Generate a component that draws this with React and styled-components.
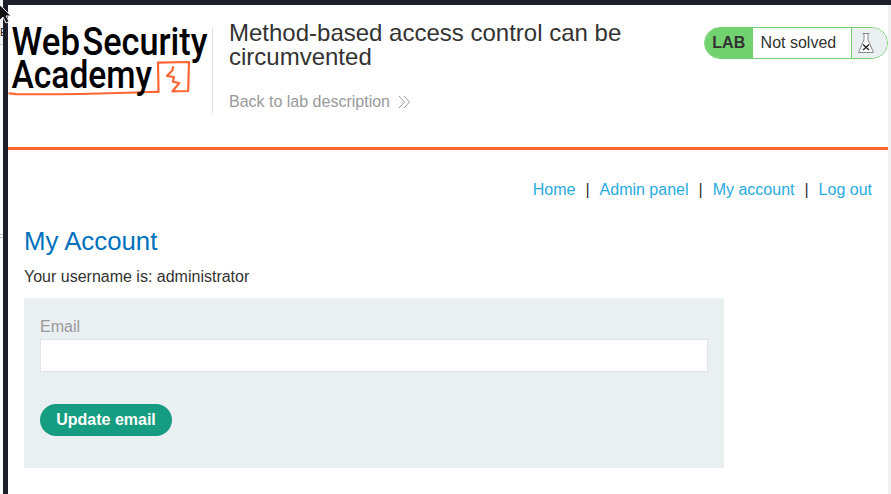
import React from "react";
import styled, { createGlobalStyle } from "styled-components";

const GlobalStyle = createGlobalStyle`
  * { box-sizing: border-box; }
  body {
    margin: 0;
    overflow: hidden;
    background: #fff;
    color: #333332;
    font: 16px/24px "Liberation Sans", Arial, sans-serif;
  }
`;

const Screen = styled.div`
  display: grid;
  grid-template-columns: 3px 1fr;
  width: 891px;
  height: 494px;
  position: relative;
  overflow: hidden;
`;

const Backdrop = styled.div`
  display: flex;
  flex-direction: column;
  overflow: hidden;
  background: #fff;
`;

const BackdropHead = styled.div`
  height: 45px;
  padding-top: 25px;
  border-bottom: 1px solid #ccc;
  background: #f4f4f5;
  color: #222;
  font-size: 11px;
  line-height: 14px;
`;

const BackdropRow = styled.div`
  height: 4px;
  margin-top: 189px;
  border: solid #bbb;
  border-width: 1px 0;
`;

const BrowserWindow = styled.div`
  display: flex;
  border: solid #1c1f2a;
  border-width: 5px 0 0 5px;
  background: #fff;
`;

const Page = styled.div`
  flex: 1;
  min-width: 0;
`;

const ScrollTrack = styled.div`
  width: 3px;
  background: #f0f0f0;
`;

const Header = styled.header`
  display: flex;
  align-items: flex-start;
  height: 145px;
  padding-top: 22px;
  border-bottom: 3px solid #ff6633;
`;

const Brand = styled.div`
  width: 205px;
  height: 86px;
  border-right: 1px solid #e1e1e1;
`;

const Logo = styled.svg`
  display: block;
  overflow: visible;
`;

const Wordmark = styled.text`
  font-family: Roboto, sans-serif;
  font-size: 38px;
  font-weight: 500;
  fill: #000;
`;

const Heading = styled.div`
  flex: 1;
  padding-left: 16px;
`;

const Title = styled.h2`
  width: 430px;
  margin: -6px 0 21px;
  font-size: 24px;
  font-weight: 400;
  line-height: 24px;
`;

const BackLink = styled.a`
  display: flex;
  align-items: center;
  gap: 8px;
  color: #999;
`;

const Status = styled.div`
  display: flex;
  width: 184px;
  height: 32px;
  overflow: hidden;
  border: 1px solid #72d26f;
  border-radius: 16px;
  line-height: 30px;
`;

const StatusTag = styled.span`
  width: 48px;
  padding-left: 7.3px;
  background: #72d26f;
  font-weight: 700;
`;

const StatusText = styled.span`
  flex: 1;
  padding-left: 7.6px;
`;

const StatusIcon = styled.span`
  display: flex;
  width: 36px;
  padding: 4px 0 0 6px;
  border-left: 1px solid #72d26f;
  background: #eaeff2;
`;

const Nav = styled.nav`
  display: flex;
  justify-content: flex-end;
  padding: 28px 16px 0 0;
`;

const NavLink = styled.a`
  color: #29abe2;
`;

const Divider = styled.span`
  width: 24.15px;
  text-align: center;
`;

const Content = styled.main`
  width: 716px;
  padding-left: 16px;
`;

const SectionTitle = styled.h1`
  margin: 23px 0 8px;
  color: #0071bc;
  font-size: 25.8px;
  font-weight: 400;
  line-height: 32px;
`;

const Text = styled.p`
  margin: 0 0 9px;
`;

const Form = styled.form`
  height: 170px;
  padding: 17px 16px;
  background: #eaeff2;
`;

const Label = styled.label`
  display: block;
  height: 24px;
  color: #999;
`;

const Input = styled.input`
  display: block;
  width: 100%;
  height: 33px;
  margin-bottom: 32px;
  border: 1px solid #e1e4e6;
  outline: none;
  background: #fff;
`;

const Button = styled.button`
  height: 32px;
  width: 132px;
  padding: 0;
  border: 0;
  border-radius: 16px;
  background: #169c80;
  color: #fff;
  font: 700 16px/32px "Liberation Sans", Arial, sans-serif;
`;

const Cursor = styled.svg`
  position: absolute;
  left: -4px;
  top: 3px;
`;

export default function App() {
  return (
    <>
      <GlobalStyle />
      <Screen>
        <Backdrop>
          <BackdropHead>E</BackdropHead>
          <BackdropRow />
        </Backdrop>
        <BrowserWindow>
          <Page>
            <Header>
              <Brand>
                <Logo width="200" height="72" viewBox="8 27 200 72">
                  <Wordmark x="11.5" y="55.3" textLength="68.5" lengthAdjust="spacingAndGlyphs">Web</Wordmark>
                  <Wordmark x="82.5" y="55.3" textLength="125" lengthAdjust="spacingAndGlyphs">Security</Wordmark>
                  <g fill="none" stroke="#ff6633" strokeWidth="2.2" strokeLinejoin="round" strokeLinecap="round">
                    <path d="M9.500 93.300L16 94.200Q76 94.500 118 93T158.500 92L158 62.700L189 62L188.200 91L172.500 91.300L179.300 83L172.800 81.600L174 77L167 75.800L172.300 70.500L173 67" />
                  </g>
                  <Wordmark x="11.5" y="88" textLength="140.5" lengthAdjust="spacingAndGlyphs">Academy</Wordmark>
                </Logo>
              </Brand>
              <Heading>
                <Title>Method-based access control can be circumvented</Title>
                <BackLink>
                  Back to lab description
                  <svg width="14" height="14" viewBox="0 0 14 14" fill="none" stroke="#999">
                    <path d="M1 1l5.500 6-5.500 6M6 1l5.500 6-5.500 6" />
                  </svg>
                </BackLink>
              </Heading>
              <Status>
                <StatusTag>LAB</StatusTag>
                <StatusText>Not solved</StatusText>
                <StatusIcon>
                  <svg width="17" height="22" viewBox="0 0 17 22" fill="#fff" stroke="#888">
                    <path d="M4.500 1.500h7M6 1.500v6.200L.500 20.500h15L10 7.700V1.500" />
                    <path d="M5 12.500l6 5.500M11 12.500l-6 5.500" stroke="#222" strokeWidth="1.300" />
                  </svg>
                </StatusIcon>
              </Status>
            </Header>
            <Nav>
              <NavLink>Home</NavLink>
              <Divider>|</Divider>
              <NavLink>Admin panel</NavLink>
              <Divider>|</Divider>
              <NavLink>My account</NavLink>
              <Divider>|</Divider>
              <NavLink>Log out</NavLink>
            </Nav>
            <Content>
              <SectionTitle>My Account</SectionTitle>
              <Text>Your username is: administrator</Text>
              <Form>
                <Label htmlFor="email">Email</Label>
                <Input id="email" type="email" />
                <Button type="button">Update email</Button>
              </Form>
            </Content>
          </Page>
          <ScrollTrack />
        </BrowserWindow>
        <Cursor width="16" height="22" viewBox="0 0 16 22">
          <path d="M3 1v17l4-4 3 6 3-1.500-3-5.500h5z" fill="#111" stroke="#eee" />
        </Cursor>
      </Screen>
    </>
  );
}
